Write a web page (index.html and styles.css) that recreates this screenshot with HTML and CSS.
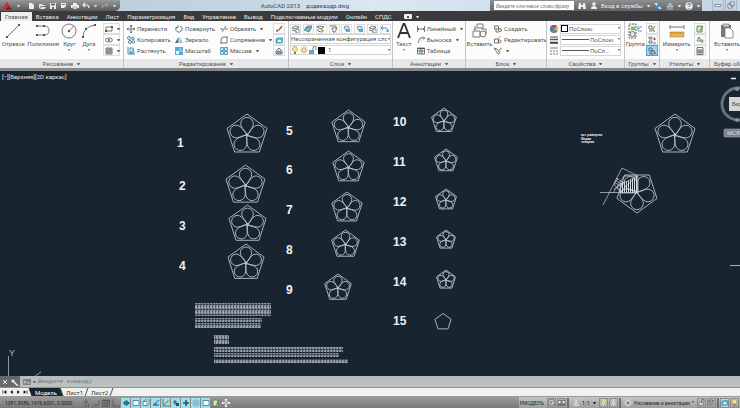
FILE: index.html
```html
<!DOCTYPE html>
<html lang="ru">
<head>
<meta charset="utf-8">
<title>AutoCAD 2013 додекаэдр.dwg</title>
<link rel="stylesheet" href="styles.css">
</head>
<body>
<svg class="defs" aria-hidden="true">
  <defs>
    <symbol id="new" viewBox="0 0 8 8"><path d="M2 1h3l2 2v4H2z" fill="#eee"/></symbol>
    <symbol id="open" viewBox="0 0 8 8"><path d="M1 2h3l1 1h2v1H3L1 7zM3 5h5L6.500 7H2z" fill="#e4e4e4"/></symbol>
    <symbol id="save" viewBox="0 0 8 8"><path d="M1 1h6v6H1z" fill="#eee"/><path d="M2 1.500h4v2H2zM3 5h2v2H3z" fill="#666"/></symbol>
    <symbol id="saveas" viewBox="0 0 8 8"><path d="M1 1h5v5H1z" fill="#eee"/><path d="M2 2h3v1H2zM3 7l4-4 1 1-4 4z" fill="#777"/></symbol>
    <symbol id="print" viewBox="0 0 8 8"><path d="M2 1h4v2h2v3H0V3h2z" fill="#eee"/><path d="M2 5h4v2H2z" fill="#fff" stroke="#777" stroke-width=".6"/></symbol>
    <symbol id="undo" viewBox="0 0 8 8"><path d="M3 1L1 3l2 2M1 3h3q3 0 3 3" fill="none" stroke="#eee" stroke-width="1.200"/></symbol>
    <symbol id="redo" viewBox="0 0 8 8"><path d="M5 1l2 2-2 2M7 3H4Q1 3 1 6" fill="none" stroke="#aaa"/></symbol>
    <symbol id="line" viewBox="0 0 16 16"><path d="M2 14L14 2" class="ln"/><path d="M1 13h2v2H1zM13 1h2v2h-2z" class="dot"/></symbol>
    <symbol id="pline" viewBox="0 0 16 16"><path d="M2 3h7q5 0 5 4.500T9 12H2" class="ln"/><path d="M1 2h2v2H1zM8 2h2v2H8zM8 11h2v2H8zM1 11h2v2H1z" class="dot"/></symbol>
    <symbol id="circle" viewBox="0 0 16 16"><circle cx="8" cy="8" r="7" class="ln"/><path d="M8 8l5-5" stroke="#5599bb"/><circle cx="8" cy="8" r="1.200" class="dot"/></symbol>
    <symbol id="arc" viewBox="0 0 16 16"><path d="M2 14Q2 4 14 2" class="ln"/><path d="M1 13h2v2H1zM4 5h2v2H4zM13 1h2v2h-2z" class="dot"/></symbol>
    <symbol id="rect" viewBox="0 0 8 8"><path d="M1 2h6v4H1z" class="th"/><path d="M0 5h2v2H0zM6 1h2v2H6z" class="dot"/></symbol>
    <symbol id="ellipse" viewBox="0 0 8 8"><ellipse cx="4" cy="4" rx="3.500" ry="2" class="th"/><circle cx="4" cy="4" r="1" class="dot"/></symbol>
    <symbol id="hatch" viewBox="0 0 8 8"><path d="M1 1h6v6H1zM3 1v6M5 1v6M1 3h6M1 5h6" class="th"/></symbol>
    <symbol id="move" viewBox="0 0 8 8"><path d="M4 0v8M0 4h8M3 1.500L4 0l1 1.500M3 6.500L4 8l1-1.500M1.500 3L0 4l1.500 1M6.500 3L8 4 6.500 5" class="th"/></symbol>
    <symbol id="rotate" viewBox="0 0 8 8"><path d="M5 1q3 1 2 4Q5 8 2.500 7 0 5.500 1 3l1-1M3 0v2.500H.500" class="th"/></symbol>
    <symbol id="trim" viewBox="0 0 8 8"><path d="M0 4h3M5 4h3M2 7L6 1" class="th"/></symbol>
    <symbol id="copy" viewBox="0 0 8 8"><circle cx="2" cy="2" r="1.500" class="bl"/><circle cx="6" cy="2.500" r="1.300" class="th"/><circle cx="3" cy="6" r="1.500" class="th"/><circle cx="6.500" cy="6" r="1.300" class="bl"/></symbol>
    <symbol id="mirror" viewBox="0 0 8 8"><path d="M3.500 1v6H0z" fill="#567"/><path d="M4.500 1v6H8z" fill="#7bc3e2"/></symbol>
    <symbol id="fillet" viewBox="0 0 8 8"><path d="M1 8V4q0-3 3-3h4M1 7h6V1" class="th"/></symbol>
    <symbol id="stretch" viewBox="0 0 8 8"><path d="M1 0v7h7M3 1h3l1 5H3z" class="bl"/><path d="M3 7l3-4" class="th"/></symbol>
    <symbol id="scale" viewBox="0 0 8 8"><path d="M0 0h8v8H0z" fill="#53aed4"/><path d="M1 4h3v3H1z" fill="#fff"/><path d="M5 1v3h3" stroke="#fff" fill="none" stroke-width=".6"/></symbol>
    <symbol id="array" viewBox="0 0 8 8"><path d="M.500.500h3v3h-3zM4.500.500h3v3h-3zM.500 4.500h3v3h-3zM4.500 4.500h3v3h-3z" fill="#cbeaf6" stroke="#378eb4" stroke-width=".8"/></symbol>
    <symbol id="brush" viewBox="0 0 8 8"><path d="M4 5l3-4" stroke="#a85a30" stroke-width="1.400"/><path d="M1 7l1-3 2 2z" fill="#555"/></symbol>
    <symbol id="explode" viewBox="0 0 8 8"><path d="M1 3l2-1 5 0v4L6 7H1z" fill="#6abddd" stroke="#257da3" stroke-width=".7"/><path d="M3 4h3v2H3z" fill="#fff"/></symbol>
    <symbol id="offset" viewBox="0 0 8 8"><path d="M1 7V4l3-3 3 3v3z" fill="#cfe4ee" stroke="#456" stroke-width=".8"/><path d="M2.500 6V4.500h3V6z" class="th"/></symbol>
    <symbol id="layers" viewBox="0 0 8 8"><path d="M0 3l3-2 4 1-3 2zM0 5l4 1 2-1" class="th"/><path d="M4 4h3v4H4z" fill="#fff" stroke="#567" stroke-width=".7"/></symbol>
    <symbol id="layfreeze" viewBox="0 0 8 8"><path d="M1 2l3-1 2 1v3L3 6z" fill="#d9eaf2" stroke="#467" stroke-width=".7"/><path d="M3 4h4v3H3z" fill="#62a9cb"/></symbol>
    <symbol id="layblue" viewBox="0 0 8 8"><path d="M0 5l3-3h5L5 7z" fill="#75bbdc" stroke="#467" stroke-width=".7"/><path d="M1 3l3-2h4" class="th"/></symbol>
    <symbol id="layred" viewBox="0 0 8 8"><path d="M0 2l3-1 4 1-3 2zM1 4v2l3 1" class="th"/><path d="M4 4l3 1-2 3z" fill="#d57b42"/></symbol>
    <symbol id="layarrow" viewBox="0 0 8 8"><path d="M0 1h6v2M2 3h5L5 7H3z" class="th"/></symbol>
    <symbol id="layback" viewBox="0 0 8 8"><path d="M0 3h5q2 0 2 4M2 1L0 3l2 2M5 6h3" class="bl"/></symbol>
    <symbol id="text" viewBox="0 0 16 16"><path d="M2 15L7.500 1h1L14 15M4 10h8" fill="none" stroke="#333" stroke-width="1.800"/></symbol>
    <symbol id="dim" viewBox="0 0 8 8"><path d="M.500 1v6M7.500 1v6M1 4h6M2 3L1 4l1 1M6 3l1 1-1 1" class="th"/></symbol>
    <symbol id="leader" viewBox="0 0 8 8"><path d="M1 7l2-5h2" class="th"/><circle cx="6.500" cy="2" r="1" class="th"/></symbol>
    <symbol id="table" viewBox="0 0 8 8"><path d="M.500 1h7v6h-7zM.500 4h7M3 2v5M5 2v5" class="th"/><path d="M.500 1h7v1h-7z" class="dot"/></symbol>
    <symbol id="insert" viewBox="0 0 16 16"><path d="M5 1h6v4H5zM1 8h7v6H1zM9 6h5v5" class="ln"/><circle cx="11" cy="11" r="3" class="ln"/><path d="M3 3v4M2 5.500L3 7l1-1.500" class="th"/></symbol>
    <symbol id="create" viewBox="0 0 8 8"><path d="M.500 1h4v3h-4zM2 4v3h3" class="th"/><circle cx="6" cy="5" r="1.500" class="th"/></symbol>
    <symbol id="edit" viewBox="0 0 8 8"><path d="M.500 3h4v4h-4z" class="th"/><circle cx="5.500" cy="5.500" r="1.500" class="th"/><path d="M3 3l4-3" stroke="#d69a3c"/></symbol>
    <symbol id="tag" viewBox="0 0 8 8"><path d="M0 1l3 1 3 4-2 1zM8 1L5 3" class="th"/><path d="M4 3l3 1-2 3z" fill="#aebd6c"/></symbol>
    <symbol id="wheel" viewBox="0 0 8 8"><circle cx="4" cy="4" r="4" fill="#d3b948"/><path d="M4 4L1 1a4 4 0 0 1 6 0z" fill="#b84c4a"/><path d="M4 4L1 1a4 4 0 0 0 1 6.500z" fill="#447bb9"/><path d="M4 4l-2 3.500A4 4 0 0 0 7.500 6z" fill="#549968"/></symbol>
    <symbol id="weight" viewBox="0 0 8 8"><path d="M0 1h8" stroke="#555"/><path d="M0 3.500h8" stroke="#555" stroke-width="1.500"/><path d="M0 6.800h8" stroke="#444" stroke-width="2"/></symbol>
    <symbol id="ltype" viewBox="0 0 8 8"><path d="M0 1h8" stroke="#777"/><path d="M0 4h8M0 7h8" stroke="#777" stroke-dasharray="2 1"/></symbol>
    <symbol id="group" viewBox="0 0 16 16"><path d="M2 1h7v14H2z" fill="#e9edda" stroke="#666" stroke-dasharray="2 1"/><circle cx="5.500" cy="11" r="2.500" class="ln"/><path d="M4 4h4v3H4z" fill="#9bac56"/><path d="M10 7l5-4M11 8h4M11 3v3" stroke="#4e9abd" fill="none"/></symbol>
    <symbol id="gedit" viewBox="0 0 8 8"><path d="M1 1h3v3H1zM1 6h3M4 6l3-5" class="th"/><path d="M5 5h2v2H5z" fill="#b9b354"/></symbol>
    <symbol id="gadd" viewBox="0 0 8 8"><path d="M1 1h3v2H1zM1 5h3v2H1zM5 3h3M6.500 1.500v3M5 7h3" class="th"/></symbol>
    <symbol id="gsel" viewBox="0 0 8 8"><path d="M1 1h3v3H1z" class="th"/><circle cx="5" cy="5.500" r="1.700" class="th"/><path d="M2 5v2h2M5 3l3 4" class="th"/></symbol>
    <symbol id="measure" viewBox="0 0 16 16"><path d="M1 4h14M1 2v4M15 2v4" class="ln"/><path d="M1 9h14v5H1z" fill="#e7b356" stroke="#b98330" stroke-width=".6"/><path d="M3 9v2M6 9v2M9 9v2M12 9v2" stroke="#855f22" stroke-width=".6"/></symbol>
    <symbol id="qselect" viewBox="0 0 8 8"><path d="M1 1h5v6H1z" fill="#d8e5c4" stroke="#5a7545" stroke-width=".8"/><path d="M4 6l3-5" stroke="#4d8b39"/></symbol>
    <symbol id="points" viewBox="0 0 8 8"><path d="M1 5l2-4 2 4zM4 4l3 3" class="th"/><circle cx="6" cy="5" r="1.700" fill="#91b080"/></symbol>
    <symbol id="calc" viewBox="0 0 8 8"><path d="M1 .500h6v7H1zM1 3h6M3 3v4M5 3v4M1 5h6" class="th"/></symbol>
    <symbol id="paste" viewBox="0 0 16 16"><path d="M2 2h10v12H2z" fill="#777"/><path d="M4 1h6v3H4z" fill="#ccc" stroke="#666" stroke-width=".6"/><path d="M6 5h5l3 3v7H6z" fill="#fff" stroke="#777" stroke-width=".8"/></symbol>
    <symbol id="bulb" viewBox="0 0 8 8"><circle cx="4" cy="3" r="2.500" fill="#ffe389" stroke="#b28a35" stroke-width=".6"/><path d="M3 6h2v2H3z" fill="#777"/></symbol>
    <symbol id="sun" viewBox="0 0 8 8"><path d="M4 0v8M0 4h8M1 1l6 6M7 1L1 7" stroke="#c39343" stroke-width=".7"/><circle cx="4" cy="4" r="2" fill="#fff0a6" stroke="#b48231" stroke-width=".6"/></symbol>
    <symbol id="lock" viewBox="0 0 8 8"><path d="M0 4h5v4H0z" fill="#62a4c8"/><path d="M4 4V2q0-2 1.500-2T7 2v2" class="th"/></symbol>
    <symbol id="padlock" viewBox="0 0 8 8"><path d="M1 4h5v3H1z" fill="#eee" stroke="#555" stroke-width=".7"/><path d="M4 4V2q0-1.500 1.500-1.500T7 2v1" class="th"/></symbol>
    <symbol id="snap" viewBox="0 0 8 8"><path d="M4 0v8M1 3h5" class="th"/><path d="M6 5h1v3H6z" class="dot"/></symbol>
    <symbol id="grip" viewBox="0 0 8 8"><path d="M1 6h4q2 0 2-2V1" class="th"/></symbol>
    <symbol id="ortho" viewBox="0 0 8 8"><path d="M1 0v7h7" class="th"/></symbol>
    <symbol id="polar" viewBox="0 0 8 8"><circle cx="4" cy="4" r="2.500" fill="#388ba7"/><path d="M1 4h7M4 1l3 3-3 3" stroke="#245" fill="none" stroke-width=".7"/></symbol>
    <symbol id="osnap" viewBox="0 0 8 8"><path d="M1 1.500h6v5H1z" fill="#f6ffff" stroke="#39798b" stroke-width=".8"/></symbol>
    <symbol id="osnap3" viewBox="0 0 8 8"><path d="M1 2.500h4v4H1zM1 2.500l2-1.500h4v4L5 6.500" fill="#f6ffff" stroke="#39798b" stroke-width=".8"/></symbol>
    <symbol id="paper" viewBox="0 0 8 8"><path d="M1 1h6v6H1z" fill="#eee" stroke="#555" stroke-width=".8"/><path d="M3 6V3h3M5 6L3 3" class="th"/></symbol>
    <symbol id="pages" viewBox="0 0 8 8"><path d="M0 1.500h3.500v4H0zM4.500 1.500H8v4H4.500z" fill="#eee" stroke="#444" stroke-width=".8"/><path d="M0 7h8" stroke="#444"/></symbol>
    <symbol id="angle" viewBox="0 0 8 8"><path d="M7 1L1 6h6M4 4v3" fill="none" stroke="#2d6779"/></symbol>
    <symbol id="ducs" viewBox="0 0 8 8"><path d="M1 0v7h7M2 6l4-4" class="th"/><path d="M5 1h3v3z" fill="#c6b349"/></symbol>
    <symbol id="plus" viewBox="0 0 8 8"><path d="M4 1v6M1 4h6" stroke="#245363" stroke-width="1.500"/></symbol>
    <symbol id="dyn" viewBox="0 0 8 8"><path d="M3 1v5M1 3h4" stroke="#245363"/><path d="M4 4h3v3H4z" fill="#245363"/></symbol>
    <symbol id="grid" viewBox="0 0 8 8"><path d="M0 0h8v8H0z" fill="#c2e9f6"/><path d="M1 1h6v6H1zM3 1v6M5 1v6M1 3h6M1 5h6" fill="none" stroke="#5299b5" stroke-width=".6"/></symbol>
    <symbol id="wplus" viewBox="0 0 8 8"><path d="M4 0v8M0 4h8" stroke="#fff" stroke-width="2.200"/><path d="M4 1v6M1 4h6" stroke="#766b7b" stroke-width=".7"/></symbol>
    <symbol id="scaleann" viewBox="0 0 8 8"><path d="M4 0v3L1 7M4 3l3 4M4 5v3" fill="none" stroke="#eee"/></symbol>
    <symbol id="scalesun" viewBox="0 0 8 8"><path d="M4 0v3L1 7M4 3l3 4M4 5v3" fill="none" stroke="#eee"/><circle cx="6" cy="2" r="1.700" fill="#e9cd69"/></symbol>
    <symbol id="gear" viewBox="0 0 8 8"><circle cx="4" cy="4" r="3" fill="#bbb" stroke="#eee" stroke-dasharray="1 .6"/><circle cx="4" cy="4" r="1" fill="#666"/></symbol>
    <symbol id="binocs" viewBox="0 0 8 8"><path d="M1 1h2v2h2V1h2l1 6H5V5H3v2H0z" fill="#eee"/></symbol>
    <symbol id="person" viewBox="0 0 8 8"><circle cx="4" cy="2" r="1.800" fill="#eee"/><path d="M1 7q0-3 3-3t3 3z" fill="#eee"/></symbol>
    <symbol id="exchange" viewBox="0 0 8 8"><path d="M0 1h3l5 6H5z" fill="#c5dff5"/><path d="M8 1H5L0 7h3z" fill="#4f83b9"/></symbol>
    <symbol id="cloud" viewBox="0 0 8 8"><path d="M4 1l3 4H1zM1 7h6" fill="#8fa9bf" stroke="#c6dcee" stroke-width=".8"/></symbol>
    <symbol id="help" viewBox="0 0 8 8"><circle cx="4" cy="4" r="3.700" fill="#eee"/><path d="M2.700 3q0-1.500 1.500-1.500T5.300 3L4 4.500v.500M4 6v1" fill="none" stroke="#4a6e90"/></symbol>
    <symbol id="flower" viewBox="-50 -50 100 100" overflow="visible">
      <path id="pent" class="cad" d="M0-50L47.600-15.500 29.400 40.500H-29.400L-47.600-15.500z"/>
      <path id="petal" class="cad" d="M0 0C-3-10-15-16-15-27A15 15 0 1 1 15-27C15-16 4-9 0 4"/><use href="#petal" transform="rotate(72)"/><use href="#petal" transform="rotate(144)"/><use href="#petal" transform="rotate(216)"/><use href="#petal" transform="rotate(288)"/>
    </symbol>
    <pattern id="glyphs" width="3" height="5" patternUnits="userSpaceOnUse"><path d="M0 .500l2 3.500M2 .500L0 4M.500.500h2M0 2.200h3M.500 4h2" stroke="#b2bac1" stroke-width=".8" fill="none"/></pattern>
    <pattern id="stripes" width="2" height="4" patternUnits="userSpaceOnUse"><path d="M.500 0v4" stroke="#d5dbe0" stroke-width="1"/></pattern>
  </defs>
</svg>

<div class="app">
  <header class="titlebar">
    <div class="quick">
      <button class="logo" aria-label="Меню"><svg viewBox="0 0 14 10"><path d="M1 9L7 0l6 9h-3L7 4 4 9z" fill="#d82632"/><path d="M5 9l3-4 5 4z" fill="#8e1019"/></svg></button>
      <span class="drop"></span>
      <button class="first" aria-label="Создать"><svg><use href="#new"/></svg></button>
      <button aria-label="Открыть"><svg><use href="#open"/></svg></button>
      <button aria-label="Сохранить"><svg><use href="#save"/></svg></button>
      <button aria-label="Сохранить как"><svg><use href="#saveas"/></svg></button>
      <button aria-label="Печать"><svg><use href="#print"/></svg></button>
      <button aria-label="Отменить"><svg><use href="#undo"/></svg></button>
      <span class="drop"></span>
      <button aria-label="Повторить"><svg><use href="#redo"/></svg></button>
      <span class="drop"></span>
    </div>
    <h1 class="title"><span>AutoCAD 2013</span><span>додекаэдр.dwg</span></h1>
    <div class="info">
      <span class="side"></span>
      <input class="search" type="text" aria-label="Поиск" placeholder="Введите ключевое слово/фразу">
      <button aria-label="Найти"><svg><use href="#binocs"/></svg></button>
      <button class="login"><svg><use href="#person"/></svg>Вход в службы</button>
      <span class="drop"></span>
      <button aria-label="Exchange"><svg><use href="#exchange"/></svg></button>
      <button aria-label="Облако"><svg><use href="#cloud"/></svg></button>
      <span class="drop"></span>
      <button aria-label="Справка"><svg><use href="#help"/></svg></button>
      <span class="drop"></span>
    </div>
    <div class="window">
      <button aria-label="Свернуть"><svg viewBox="0 0 8 8"><path d="M1 3.500h6v2H1z" fill="#fff" stroke="#667" stroke-width=".7"/></svg></button>
      <button aria-label="Развернуть"><svg viewBox="0 0 8 8"><path d="M3 1h4v4H3zM1 3h4v4H1z" fill="#fff" stroke="#667" stroke-width=".8"/></svg></button>
    </div>
  </header>

  <nav class="tabs">
    <a href="#" class="active">Главная</a><a href="#">Вставка</a><a href="#">Аннотации</a><a href="#">Лист</a><a href="#">Параметризация</a><a href="#">Вид</a><a href="#">Управление</a><a href="#">Вывод</a><a href="#">Подключаемые модули</a><a href="#">Онлайн</a><a href="#">СПДС</a>
    <button class="pill" aria-label="Вид ленты"><i></i></button><span class="drop"></span>
  </nav>

  <main class="ribbon">
    <section class="panel">
      <div class="body draw">
        <button class="big"><svg><use href="#line"/></svg>Отрезок</button>
        <button class="big"><svg><use href="#pline"/></svg>Полилиния</button>
        <button class="big more"><svg><use href="#circle"/></svg>Круг</button>
        <button class="big more"><svg><use href="#arc"/></svg>Дуга</button>
        <div class="rows boxed">
          <button aria-label="Прямоугольник"><svg><use href="#rect"/></svg><span class="drop"></span></button>
          <button aria-label="Эллипс"><svg><use href="#ellipse"/></svg><span class="drop"></span></button>
          <button aria-label="Штриховка"><svg><use href="#hatch"/></svg><span class="drop"></span></button>
        </div>
      </div>
      <h2>Рисование<span class="drop"></span></h2>
    </section>

    <section class="panel">
      <div class="body modify">
        <div class="rows"><button><svg><use href="#move"/></svg>Перенести</button><button><svg><use href="#copy"/></svg>Копировать</button><button><svg><use href="#stretch"/></svg>Растянуть</button></div>
        <div class="rows"><button><svg><use href="#rotate"/></svg>Повернуть</button><button><svg><use href="#mirror"/></svg>Зеркало</button><button><svg><use href="#scale"/></svg>Масштаб</button></div>
        <div class="rows"><button><svg><use href="#trim"/></svg>Обрезать<span class="drop"></span></button><button><svg><use href="#fillet"/></svg>Сопряжение<span class="drop"></span></button><button><svg><use href="#array"/></svg>Массив<span class="drop"></span></button></div>
        <div class="rows boxed"><button aria-label="Стереть"><svg><use href="#brush"/></svg></button><button aria-label="Расчленить"><svg><use href="#explode"/></svg></button><button aria-label="Подобие"><svg><use href="#offset"/></svg></button></div>
      </div>
      <h2>Редактирование<span class="drop"></span></h2>
    </section>

    <section class="panel">
      <div class="body rows layer">
        <div class="iconbar">
          <button aria-label="Свойства слоя"><svg><use href="#layers"/></svg></button><button aria-label="Слой текущий"><svg><use href="#layblue"/></svg></button><button aria-label="Откл"><svg><use href="#layred"/></svg></button><button aria-label="Изолировать"><svg><use href="#layarrow"/></svg></button><button aria-label="Заморозить"><svg><use href="#layfreeze"/></svg></button><button aria-label="Блокировать"><svg><use href="#layfreeze"/></svg></button><button aria-label="Соответствие"><svg><use href="#layers"/></svg></button><button aria-label="Предыдущий"><svg><use href="#layback"/></svg></button>
        </div>
        <label class="combo"><select aria-label="Конфигурация слоев"><option>Несохраненная конфигурация сло</option></select></label>
        <label class="combo"><svg><use href="#bulb"/></svg><svg><use href="#sun"/></svg><svg><use href="#lock"/></svg><i class="swatch"></i><select class="gap" aria-label="Слой"><option>1</option></select></label>
      </div>
      <h2>Слои<span class="drop"></span></h2>
    </section>

    <section class="panel">
      <div class="body split">
        <button class="big more"><svg><use href="#text"/></svg>Текст</button>
        <div class="rows"><button><svg><use href="#dim"/></svg>Линейный<span class="drop"></span></button><button><svg><use href="#leader"/></svg>Выноска<span class="drop"></span></button><button><svg><use href="#table"/></svg>Таблица</button></div>
      </div>
      <h2>Аннотации<span class="drop"></span></h2>
    </section>

    <section class="panel">
      <div class="body split tight">
        <button class="big"><svg><use href="#insert"/></svg>Вставить</button>
        <div class="rows"><button><svg><use href="#create"/></svg>Создать</button><button><svg><use href="#edit"/></svg>Редактировать</button><button aria-label="Атрибуты"><svg><use href="#tag"/></svg><span class="drop"></span></button></div>
      </div>
      <h2>Блок<span class="drop"></span></h2>
    </section>

    <section class="panel">
      <div class="body rows props">
        <label class="prop"><svg><use href="#wheel"/></svg><span class="combo"><i class="swatch white"></i><select aria-label="Цвет"><option>ПоСлою</option></select></span></label>
        <label class="prop"><svg><use href="#weight"/></svg><span class="combo"><i class="rule"></i><select aria-label="Вес линий"><option>ПоСлою</option></select></span></label>
        <label class="prop"><svg><use href="#ltype"/></svg><span class="combo"><i class="rule"></i><select aria-label="Тип линий"><option>ПоСл...</option></select></span></label>
      </div>
      <h2>Свойства<span class="drop"></span></h2>
    </section>

    <section class="panel">
      <div class="body split tight">
        <button class="big"><svg><use href="#group"/></svg>Группа</button>
        <div class="rows boxed"><button aria-label="Правка группы"><svg><use href="#gedit"/></svg></button><button aria-label="Добавить"><svg><use href="#gadd"/></svg></button><button class="on" aria-label="Выбор группы"><svg><use href="#gsel"/></svg></button></div>
      </div>
      <h2>Группы<span class="drop"></span></h2>
    </section>

    <section class="panel">
      <div class="body util">
        <button class="big more"><svg><use href="#measure"/></svg>Измерить</button>
        <div class="rows boxed"><button aria-label="Быстрый выбор"><svg><use href="#qselect"/></svg></button><button aria-label="Точки"><svg><use href="#points"/></svg></button><button aria-label="Калькулятор"><svg><use href="#calc"/></svg></button></div>
      </div>
      <h2>Утилиты<span class="drop"></span></h2>
    </section>

    <section class="panel clip">
      <div class="body"><button class="big more"><svg><use href="#paste"/></svg>Вставить</button></div>
      <h2>Буфер об</h2>
    </section>
  </main>

  <section class="canvas">
    <svg viewBox="0 71 740 305" preserveAspectRatio="xMinYMin meet">
      <text x="2" y="79" class="view">[−][Верхняя][2D каркас]</text>
      <g class="nums">
        <text x="177" y="147">1</text><text x="179" y="190">2</text><text x="179" y="230">3</text><text x="179" y="270">4</text>
        <text x="286" y="135">5</text><text x="286" y="174">6</text><text x="286" y="214">7</text><text x="286" y="254">8</text><text x="286" y="294">9</text>
        <text x="393" y="126">10</text><text x="393" y="166">11</text><text x="393" y="206">12</text><text x="393" y="246">13</text><text x="393" y="286">14</text><text x="393" y="325">15</text>
      </g>
      <g class="shapes">
        <use href="#flower" x="226" y="114" width="42" height="42"/>
        <use href="#flower" x="225" y="165" width="41" height="41"/>
        <use href="#flower" x="228" y="205" width="39" height="39"/>
        <use href="#flower" x="227" y="244" width="38" height="38"/>
        <use href="#flower" x="331" y="110" width="35" height="35"/>
        <use href="#flower" x="332" y="151" width="33" height="33"/>
        <use href="#flower" x="331" y="192" width="32" height="32"/>
        <use href="#flower" x="331" y="230" width="29" height="29"/>
        <use href="#flower" x="324" y="274" width="28" height="28"/>
        <use href="#flower" x="431" y="108" width="26" height="26"/>
        <use href="#flower" x="434" y="149" width="24" height="24"/>
        <use href="#flower" x="435" y="189" width="22" height="22"/>
        <use href="#flower" x="436" y="230" width="20" height="20"/>
        <use href="#flower" x="436" y="270" width="20" height="20"/>
        <use href="#pent" transform="translate(443 322) scale(.17)"/>
        <use href="#flower" x="654" y="114" width="42" height="42"/>
        <use href="#flower" x="-21" y="-21" width="42" height="42" transform="translate(637 192) rotate(180)"/>
      </g>
      <g class="sketch">
        <path d="M603 205L622 168 638 176V192M600 192.500H637M624 176L613 193M618 178l-4 6 6 8M622 184l-8 5M624 176h13l-17 16"/>
        <path d="M616 178l8 5M615 180l8 5M614 182l8 5M617 186l4 5M619 185l6-3"/>
        <path d="M621 183L628 181 637 176V193H620z" fill="url(#stripes)"/>
      </g>
      <g class="note"><text x="581" y="136">ост. развертка</text><text x="581" y="140">Форма</text><text x="581" y="143">толщина</text></g>
      <g fill="url(#glyphs)">
        <path d="M195 303h76v13h-76zM195 318h67v4h-67zM195 323h66v5h-66zM214 335h15v9h-15zM214 347h129v5H214zM214 353h125v4H214zM214 359h134v4H214z"/>
      </g>
      <g class="axis"><path d="M8.500 356V376M35 376l6-4"/><text x="9" y="356">Y</text></g>
      <path d="M731 78.500h5" stroke="#eee" stroke-width="1.500"/><path d="M730 265.500h10" stroke="#a4adb5"/>
      <g class="cube">
        <circle cx="738" cy="104" r="16"/><path d="M729 97h12v14h-12z"/><text x="732" y="106">Вер</text>
        <rect x="724" y="129" width="20" height="8" rx="1"/><text x="727" y="135" class="ucs">МСК</text>
      </g>
      <circle cx="737" cy="89" r="2" fill="#87909a"/><circle cx="737" cy="120" r="2" fill="#87909a"/>
    </svg>
  </section>

  <div class="command">
    <div class="handle"><svg viewBox="0 0 8 8"><path d="M2 2l4 4M6 2L2 6" stroke="#eee" fill="none"/></svg><svg viewBox="0 0 8 8"><path d="M1 2l3 3M3 4l4 4" stroke="#eee" stroke-width="1.500"/><circle cx="2" cy="3" r="1.500" fill="#eee"/></svg></div>
    <svg class="prompt" viewBox="0 0 8 8"><path d="M0 1h8v6H0z" fill="#7d8383"/><path d="M1 3l2 1-2 1M4 5h3" stroke="#ddd" fill="none" stroke-width=".8"/></svg>
    <span class="drop"></span>
    <input type="text" aria-label="Команда" placeholder="Введите команду">
  </div>

  <nav class="sheets">
    <div class="pager"><button aria-label="Первый"><svg viewBox="0 0 8 8"><path d="M1 1h1v6H1zM7 1v6L3 4z"/></svg></button><button aria-label="Назад"><svg viewBox="0 0 8 8"><path d="M6 1v6L2 4z"/></svg></button><button aria-label="Вперед"><svg viewBox="0 0 8 8"><path d="M2 1v6l4-3z"/></svg></button><button aria-label="Последний"><svg viewBox="0 0 8 8"><path d="M6 1h1v6H6zM1 1v6l4-3z"/></svg></button></div>
    <a href="#" class="current">Модель</a><a href="#">Лист1</a><a href="#">Лист2</a>
  </nav>

  <footer class="status">
    <output>1381.3986, 1476.6001, 0.0000</output>
    <div class="modes">
      <button aria-label="Ограничения"><svg><use href="#snap"/></svg></button><button aria-label="Шаг"><svg><use href="#grip"/></svg></button><button aria-label="Сетка"><svg><use href="#table"/></svg></button><button aria-label="Орто"><svg><use href="#ortho"/></svg></button>
      <button class="on" aria-label="Полярное"><svg><use href="#polar"/></svg></button><button class="on" aria-label="Привязка"><svg><use href="#osnap"/></svg></button><button class="on" aria-label="3D привязка"><svg><use href="#osnap3"/></svg></button><button class="on" aria-label="Отслеживание"><svg><use href="#angle"/></svg></button><button class="on" aria-label="ДПСК"><svg><use href="#ducs"/></svg></button><button class="on" aria-label="Ввод"><svg><use href="#dyn"/></svg></button><button class="on" aria-label="Вес"><svg><use href="#plus"/></svg></button><button class="on" aria-label="Прозрачность"><svg><use href="#grid"/></svg></button><button class="on" aria-label="Свойства"><svg><use href="#osnap"/></svg></button><button aria-label="Циклический выбор"><svg><use href="#qselect"/></svg></button><button aria-label="Монитор"><svg><use href="#wplus"/></svg></button>
    </div>
    <div class="tools">
      <button>РМОДЕЛЬ</button>
      <button class="ico" aria-label="Модель"><svg><use href="#paper"/></svg></button><button class="ico" aria-label="Листы"><svg><use href="#pages"/></svg></button><i class="sep"></i>
      <button class="scale"><svg><use href="#scaleann"/></svg>1:1<span class="drop"></span></button>
      <button class="ico" aria-label="Видимость аннотаций"><svg><use href="#scalesun"/></svg></button><button class="ico" aria-label="Автомасштаб"><svg><use href="#scaleann"/></svg></button><i class="sep"></i>
      <label class="space"><svg><use href="#gear"/></svg><select aria-label="Рабочее пространство"><option>Рисование и аннотации</option></select></label>
      <button class="ico" aria-label="Блокировка"><svg><use href="#padlock"/></svg></button><button class="ico" aria-label="Панели"><svg><use href="#layred"/></svg></button><i class="sep"></i><button class="ico on" aria-label="Ускорение"><svg><use href="#explode"/></svg></button><button class="ico" aria-label="Изоляция"><svg><use href="#bulb"/></svg></button>
    </div>
  </footer>
</div>
</body>
</html>
```
FILE: styles.css
```css
* { box-sizing: border-box; }
body { margin: 0; font: 6px/8px Roboto, "Liberation Sans", sans-serif; color: #555; }
button, input, select { margin: 0; padding: 0; border: 0; background: none; color: inherit; font: inherit; border-radius: 0; min-width: 0; }
button { display: flex; align-items: center; justify-content: center; white-space: nowrap; }
select { appearance: none; flex: 1; }
a { color: inherit; text-decoration: none; }
h1, h2 { margin: 0; font: inherit; }
svg { display: block; width: 8px; height: 8px; flex: none; }
.defs { position: absolute; width: 0; height: 0; }
.ln { fill: none; stroke: #777; stroke-width: 1; }
.th { fill: none; stroke: #555; stroke-width: .8; }
.bl { fill: none; stroke: #3c91b7; stroke-width: 1; }
.dot { fill: #555; }
.cad { vector-effect: non-scaling-stroke; stroke-width: .9px; }
.drop { border: 1px solid transparent; border-top: 2px solid currentColor; border-bottom: 0; width: 3px; height: 2px; margin-left: 4px; flex: none; }

.app { display: flex; flex-direction: column; height: 100vh; overflow: hidden; }

.titlebar { display: flex; height: 11px; background: linear-gradient(90deg, #b8c9d6, #c6d7e4 35%, #dae8f2 50%, #c4d4e2); }
.quick { display: flex; align-items: center; gap: 3px; width: 120px; padding-left: 1px; color: #ddd; background: linear-gradient(#98999b, #58595b); border-radius: 0 0 5px 0; }
.quick .drop { margin: 0 1px; }
.quick .first { margin-left: 3px; }
.logo svg { width: 12px; height: 10px; }
.title { flex: 1; display: flex; justify-content: center; gap: 6px; line-height: 11px; color: #3c454d; white-space: nowrap; }
.info { display: flex; align-items: center; gap: 4px; padding-right: 2px; color: #eee; background: linear-gradient(#8e8f91, #626365); }
.info .drop { margin: 0; }
.side { width: 0; }
.search { width: 80px; height: 9px; padding: 0 2px; background: #fff; font-size: 5px; font-style: italic; flex: none; }
.search::placeholder { color: #777; opacity: 1; }
.login { gap: 3px; }
.window { display: flex; gap: 1px; width: 38px; padding-left: 10px; }
.window button { width: 12px; border: 1px solid #a9b8c5; border-top: 0; }

.tabs { display: flex; height: 10px; background: #3b3b3d; color: #e6e6e6; line-height: 9px; align-items: stretch; padding: 1px 0 0 1px; }
.tabs a { padding: 0 4px; white-space: nowrap; }
.tabs .active { background: #eee; color: #555; }
.pill { align-self: center; width: 8px; height: 5px; margin-left: 8px; background: #eee; border-radius: 1px; }
.pill i { width: 2px; height: 2px; background: #555; }
.tabs .drop { align-self: center; }

.ribbon { display: grid; grid-template-columns: 124fr 165fr 104fr 73fr 81fr 78fr 35fr 50fr 30fr; height: 50px; border-bottom: 3px solid #858789; background: #fcfcfc; }
.panel { display: flex; flex-direction: column; min-width: 0; overflow: hidden; border-right: 1px solid #c2c4c6; }
.panel h2 { display: flex; align-items: center; justify-content: center; height: 9px; background: #e6e7e8; white-space: nowrap; }
.body { flex: 1; padding: 2px 3px 0; }
.draw, .modify, .split, .util { display: flex; gap: 4px; }
.draw { gap: 5px; }
.draw .big { flex: 1 1 auto; }
.draw .rows { margin-left: 2px; }
.modify { display: grid; grid-template-columns: 44px 41px 1fr 12px; }
.split { gap: 5px; }
.tight { gap: 2px; padding: 2px 1px 0; }
.big { flex-direction: column; justify-content: flex-start; height: 34px; }
.big svg { width: 16px; height: 16px; margin-bottom: 1px; }
.big.more::after { content: ""; border: 1px solid transparent; border-top: 2px solid #666; margin-top: 1px; }
.rows { display: grid; grid-template-rows: repeat(3, 11px); align-content: start; }
.rows > button { justify-content: flex-start; gap: 2px; }
.rows .drop { margin-left: 2px; }
.boxed > button { padding: 0 1px; border: 1px solid #dcdfe1; }
.boxed > .on { background: #9fd5f0; border-color: #4aa2cf; }
.iconbar { display: flex; justify-content: space-between; align-items: center; }
.iconbar button { width: 11px; height: 10px; border: 1px solid #dde0e2; }
.combo { display: flex; align-items: center; gap: 1px; border: 1px solid #d3d5d7; background: #fff; height: 10px; min-width: 0; flex: 1; }
.combo::after, .space::after { content: ""; border: 1px solid transparent; border-top: 2px solid #555; }
.combo select { width: 0; overflow: hidden; }
.combo .gap { margin-left: 2px; }
.layer { padding: 2px 1px 0; }
.swatch { width: 7px; height: 7px; background: #000; border: 1px solid #000; }
.swatch.white { background: #fff; }
.rule { width: 27px; height: 1px; margin-left: 1px; background: #555; }
.prop { display: flex; align-items: center; gap: 2px; }
.clip { border-right: 0; }
.clip .body { padding-left: 4px; }
.clip h2 { justify-content: flex-start; padding-left: 4px; }

.canvas { flex: 1; min-height: 0; background: #18242f; overflow: hidden; }
.canvas > svg { width: 100%; height: 100%; }
.view { fill: #e4e9ec; font-size: 6px; }
.nums { fill: #f2f2f2; font: bold 12px "Liberation Sans", sans-serif; }
.shapes { fill: none; stroke: #b9c1c8; }
.sketch { fill: none; stroke: #c6cdd2; stroke-width: .7; }
.note { fill: #fff; font: bold 3px "Liberation Sans", sans-serif; }
.axis { fill: #aeb5ba; stroke: none; font: 9px "Liberation Sans", sans-serif; }
.axis path { stroke: #8f989f; }
.cube circle { fill: none; stroke: #68737e; stroke-width: 3; }
.cube path { fill: #d4d5d4; }
.cube rect { fill: #79828e; stroke: #a0a6af; stroke-width: .6; }
.cube text { fill: #555; font-size: 5px; }
.cube .ucs { fill: #d8dce0; font-size: 6px; }

.command { display: flex; align-items: center; height: 12px; background: linear-gradient(#b3bbc0, #bcc3bf); border-bottom: 1px solid #8c9190; color: #666; }
.handle { display: flex; align-items: center; gap: 2px; width: 20px; height: 100%; padding-left: 1px; background: #666969; }
.prompt { margin-left: 3px; }
.command .drop { margin: 0 2px; }
.command input { flex: 1; font: italic 6px/8px "Liberation Mono", monospace; }
.command input::placeholder { color: #777; opacity: 1; }

.sheets { display: flex; height: 9px; background: #f1f1f1; line-height: 9px; color: #333; border-bottom: 1px solid #999; }
.pager { display: flex; width: 30px; gap: 1px; padding-left: 1px; }
.pager button { width: 6px; }
.pager svg { width: 5px; height: 6px; }
.sheets a { position: relative; z-index: 0; padding: 0 4px; }
.sheets a::before { content: ""; position: absolute; inset: 0; z-index: -1; border-right: 1px solid #555; transform: skewX(-20deg); }
.sheets .current { color: #fff; padding: 0 5px; }
.sheets .current::before { background: #18242f; transform: skewX(20deg); }

.status { display: flex; align-items: center; height: 11px; background: linear-gradient(#9b9b9b, #787878); color: #222; }
.status output { width: 81px; padding-left: 5px; font-size: 5px; white-space: nowrap; }
.modes { display: flex; }
.modes button { width: 10px; height: 10px; border-right: 1px solid #888; }
.modes .on, .tools .on { background: #9cdfed; }
.tools { display: flex; align-items: center; gap: 1px; height: 100%; margin-left: auto; padding: 0 1px; background: linear-gradient(#c6c6c6, #9d9d9d); }
.tools > button:first-child { font-size: 5px; margin-right: 2px; }
.ico { width: 9px; height: 10px; border: 1px solid #8b8b8b; }
.ico svg { width: 7px; height: 7px; }
.sep { width: 2px; height: 10px; background: #6e6e6e; }
.scale { gap: 2px; padding: 0 2px; }
.scale .drop { margin-left: 1px; }
.space { display: flex; align-items: center; gap: 2px; padding: 0 2px; font-size: 5px; }
```
